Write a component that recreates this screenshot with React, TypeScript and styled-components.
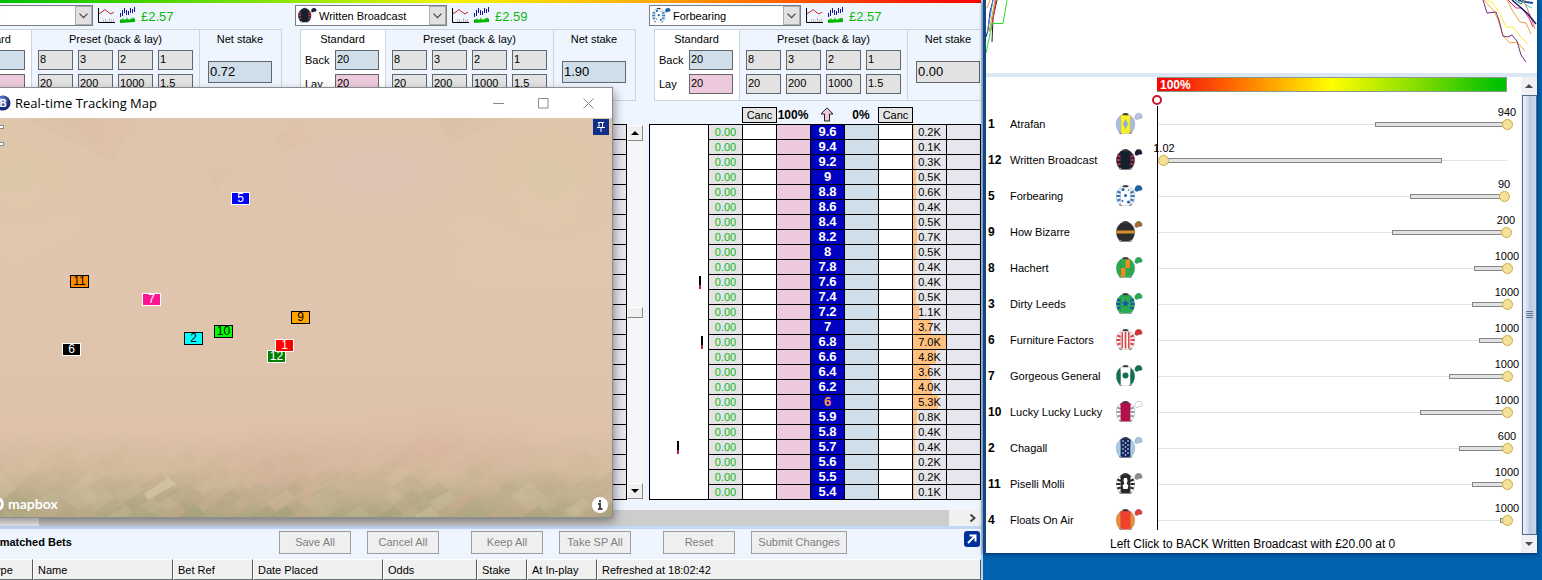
import React from "react";
import styled, { createGlobalStyle } from "styled-components";

const navy = "#00309c";
const pane = "#eef5fe";

const GlobalStyle = createGlobalStyle`
  * { box-sizing: border-box; }
  body { margin: 0; background: #0062b0; color: #000; font: 11px/14px "Liberation Sans", Arial, sans-serif; }
  button, input, select { font: inherit; color: inherit; margin: 0; border-radius: 0; }
  svg { display: block; flex: none; }
`;

const Desktop = styled.div`
  position: relative;
  display: grid;
  grid-template-columns: minmax(0, 983fr) minmax(0, 559fr);
  align-items: start;
  min-height: 100vh;
  overflow: hidden;
`;

/* ---------- ladder window ---------- */

const LadderWindow = styled.main`
  min-width: 0;
  overflow: hidden;
  background: ${pane};
  border-right: 2px solid #b9d3f3;
`;

const HeatStrip = styled.div`
  height: 3px;
  background: linear-gradient(90deg, #00c000 0%, #9bea00 32%, #f4f400 46%, #ffb400 64%, #ff2000 92%, #f00 100%);
`;

const Panels = styled.div`
  display: flex;
  margin-left: -59px;
  padding-top: 2px;
`;

const Panel = styled.section`
  flex: none;
  width: 354px;
`;

const PickerRow = styled.div`
  display: flex;
  align-items: center;
  gap: 5px;
  height: 21px;
`;

const Combo = styled.div`
  display: flex;
  align-items: center;
  width: 152px;
  height: 21px;
  padding-left: 2px;
  background: #fff;
  border: 1px solid #7a7e84;
`;

const ComboSelect = styled.select`
  flex: 1;
  min-width: 0;
  height: 19px;
  padding: 0 0 0 2px;
  border: 0;
  background: transparent;
  appearance: none;
`;

const ComboArrow = styled.span`
  display: grid;
  place-items: center;
  width: 17px;
  height: 19px;
  background: #e1e1e1;
  border: 1px solid #adadad;
`;

const Profit = styled.span`
  font-size: 13px;
  line-height: 16px;
  padding-top: 2px;
  color: #0cb80c;
`;

const StakeGroup = styled.div`
  display: grid;
  grid-template-columns: 85px 168px 81px;
  width: 336px;
  margin: 3px 0 5px 5px;
  border: 1px solid #cdd3dc;
`;

const StakeColumn = styled.div<{ $white?: boolean; $pad: string }>`
  padding: ${(p) => p.$pad};
  background: ${(p) => (p.$white ? "#fff" : "transparent")};
  border-right: 1px solid #cdd3dc;
  &:last-child { border-right: 0; }
`;

const StakeTitle = styled.div`
  display: block;
  height: 19px;
  line-height: 17px;
  text-align: center;
`;

const StandardGrid = styled.div`
  display: grid;
  grid-template-columns: 30px 44px;
  row-gap: 4px;
  align-items: center;
`;

const PresetGrid = styled.div`
  display: grid;
  grid-template-columns: repeat(4, 35px);
  gap: 4px 5px;
`;

const Field = styled.input<{ $tone: "blue" | "pink" | "grey" }>`
  display: block;
  width: 100%;
  height: 20px;
  padding: 0 0 2px 1px;
  border: 1px solid #62666d;
  background: ${(p) => ({ blue: "#d0deea", pink: "#ecc9dc", grey: "#e2e2e2" })[p.$tone]};
`;

const NetField = styled(Field)`
  height: 22px;
  margin-top: 11px;
  font-size: 13px;
`;

const LadderHead = styled.div`
  display: grid;
  grid-template-columns: 93px 34px 34px 34px 34px 34px;
  align-items: center;
  height: 18px;
  padding-bottom: 1px;
  font-size: 12px;
  font-weight: bold;
  text-align: center;
  > :first-child { grid-column: 2; }
`;

const CancelButton = styled.button`
  width: 35px;
  height: 16px;
  padding: 0;
  line-height: 12px;
  font-size: 11px;
  font-weight: normal;
  background: #e4e4e4;
  border: 1px solid #000;
`;

const Centered = styled.span`
  display: grid;
  place-items: center;
`;

const LadderRow = styled.div`
  display: flex;
`;

const HeadSpacer = styled.div`
  height: 18px;
`;

const LadderTable = styled.table`
  flex: none;
  width: 332px;
  table-layout: fixed;
  border-collapse: separate;
  border-spacing: 0;
  border-top: 1px solid #000;
  border-left: 1px solid #000;
`;

const cellColors = {
  white: "#fff",
  profit: "#e4e4e6",
  pink: "#ecc9dc",
  price: "#0000c0",
  blue: "#d0deea",
  amount: "#e6e6ea",
  spare: "#e7e6ee",
};

const Cell = styled.td<{ $kind: keyof typeof cellColors; $last?: boolean }>`
  height: 15px;
  padding: 0;
  line-height: 14px;
  text-align: center;
  background: ${(p) => cellColors[p.$kind]};
  border-right: 1px solid #000;
  border-bottom: 1px solid #000;
  color: ${(p) => (p.$kind === "profit" ? "#10b818" : p.$kind === "price" ? (p.$last ? "#ff9a50" : "#fff") : "#000")};
  ${(p) => p.$kind === "price" && "font-size: 13px; font-weight: bold;"}
`;

const Amount = styled.div`
  height: 14px;
  background-image: linear-gradient(#ffc080, #ffc080);
  background-repeat: no-repeat;
`;

const ClassicScroll = styled.div`
  display: flex;
  flex-direction: column;
  justify-content: space-between;
  width: 17px;
  margin-right: 5px;
  padding: 1px 0;
  background: #f4f6f8;
`;

const ScrollButton = styled.button<{ $thumb?: boolean }>`
  display: grid;
  place-items: center;
  width: 16px;
  height: ${(p) => (p.$thumb ? "11px" : "16px")};
  padding: 0;
  background: #f0f0f0;
  border: 1px solid;
  border-color: #fff #888 #888 #fff;
`;

const HScroll = styled.div`
  display: flex;
  align-items: center;
  height: 16px;
  margin-top: 10px;
  padding: 0 4px 0 39px;
  background: #f0f0f0;
`;

const HThumb = styled.div`
  flex: 1;
  height: 16px;
  margin-right: 20px;
  background: #cdcdcd;
`;

/* ---------- unmatched bets ---------- */

const Bets = styled.section`
  margin-left: -12px;
  border-top: 3px solid #c2d8f6;
`;

const BetsBar = styled.div`
  display: flex;
  align-items: center;
  height: 30px;
  padding: 0 0 4px 0;
`;

const BetsTitle = styled.h2`
  flex: none;
  width: 294px;
  margin: 0 0 0 -3px;
  font-size: 11px;
  line-height: 14px;
`;

const ButtonPair = styled.div`
  display: flex;
  flex: none;
  gap: 16px;
  margin-right: 32px;
`;

const BetButton = styled.button<{ $wide?: boolean }>`
  width: ${(p) => (p.$wide ? "96px" : "72px")};
  height: 23px;
  padding: 0;
  color: #7c7f84;
  background: #efefef;
  border: 1px solid #9a9ea6;
`;

const PopOut = styled.button`
  margin: 0 1px 6px auto;
  padding: 0;
  border: 0;
  background: none;
`;

const BetsTable = styled.table`
  width: 100%;
  table-layout: fixed;
  border-collapse: separate;
  border-spacing: 0;
`;

const BetsHead = styled.th<{ $w?: number }>`
  width: ${(p) => (p.$w ? p.$w + "px" : "auto")};
  height: 21px;
  padding: 0 0 0 4px;
  font-weight: normal;
  text-align: left;
  background: #f0f0f0;
  border: 1px solid;
  border-color: #fff #55585c #6c6f74 #fff;
  &:first-child { padding-left: 0; }
`;

/* ---------- tracking map ---------- */

const MapWindow = styled.section`
  position: absolute;
  left: -12px;
  top: 88px;
  width: 624px;
  background: #fff;
  box-shadow: 0 0 0 1px #8d8d8d, 2px 4px 10px rgba(0, 0, 0, 0.45);
`;

const MapTitleBar = styled.header`
  display: flex;
  align-items: center;
  gap: 4px;
  height: 30px;
  padding: 0 18px 0 7px;
`;

const MapTitle = styled.h1`
  flex: 1;
  margin: 0;
  font: 13px/18px "Open Sans", "Noto Sans", sans-serif;
`;

const WindowButton = styled.button`
  width: 11px;
  height: 11px;
  margin-left: 30px;
  padding: 0;
  border: 0;
  background: none;
`;

const MapCanvas = styled.div`
  position: relative;
  height: 399px;
  overflow: hidden;
  background: #e1c5ae;
`;

const MapTerrain = styled.svg`
  width: 100%;
  height: 100%;
`;

const Marker = styled.span<{ $x: number; $y: number; $bg: string; $fg: string }>`
  position: absolute;
  left: ${(p) => p.$x}px;
  top: ${(p) => p.$y}px;
  width: 19px;
  height: 13px;
  line-height: 11px;
  font-size: 12px;
  text-align: center;
  color: ${(p) => p.$fg};
  background: ${(p) => p.$bg};
  border: 1px solid ${(p) => p.$fg};
`;

const PinButton = styled.button`
  position: absolute;
  top: 1px;
  right: 3px;
  padding: 0;
  border: 0;
  background: none;
`;

const InfoButton = styled(PinButton)`
  top: auto;
  right: 4px;
  bottom: 4px;
`;

const ZoomControls = styled.div`
  position: absolute;
  left: 0;
  top: 7px;
  display: grid;
  gap: 13px;
`;

const ZoomKnob = styled.button`
  width: 16px;
  height: 4px;
  padding: 0;
  background: #fff;
  border: 1px solid #8d8d8d;
`;

const Mapbox = styled.a`
  position: absolute;
  left: 2px;
  bottom: 5px;
  display: flex;
  align-items: center;
  gap: 4px;
  font: bold 14px/16px Lato, sans-serif;
  color: #fff;
  text-decoration: none;
`;

/* ---------- runners window ---------- */

const RunnersWindow = styled.aside`
  margin-right: 5px;
  background: #fff;
  border-left: 3px solid #104a80;
  box-shadow: 0 1px 4px rgba(0, 20, 60, 0.7);
`;

const OddsChart = styled.div`
  display: flex;
  justify-content: space-between;
  height: 77px;
  border-bottom: 4px solid #dce7f5;
`;

const RunnersBody = styled.div`
  display: flex;
`;

const RunnersMain = styled.div`
  flex: 1;
  min-width: 0;
  padding: 0 14px 0 0;
`;

const BookBar = styled.div`
  height: 15px;
  margin-left: 171px;
  padding-left: 3px;
  line-height: 14px;
  font-size: 12px;
  font-weight: bold;
  color: #fff;
  border: 1px solid #8a9a8a;
  border-left: 0;
  background: linear-gradient(90deg, #f00 0%, #f01010 4%, #ff6000 20%, #ff0 50%, #84dc00 75%, #00c000 98%);
`;

const BookKnob = styled.div`
  height: 14px;
  margin-left: 165px;
  padding-top: 2px;
`;

const RunnerRow = styled.div`
  display: grid;
  grid-template-columns: 22px 106px 41px minmax(0, 1fr);
  align-items: center;
  height: 36px;
  padding-left: 2px;
`;

const RunnerNumber = styled.b`
  font-size: 12px;
`;

const Track = styled.div`
  position: relative;
  align-self: start;
  height: 36px;
  border-left: 1px solid #000;
  background: linear-gradient(#e2e2e2, #e2e2e2) 0 18px / 100% 1px no-repeat;
  ${RunnerRow}:last-of-type & { height: 28px; }
`;

const Range = styled.div`
  position: absolute;
  top: 16px;
  height: 5px;
  background: #e2e2e2;
  border: 1px solid #868686;
`;

const Price = styled.div`
  position: absolute;
  top: 0;
  display: flex;
  flex-direction: column;
  align-items: center;
  width: 40px;
  margin-left: -20px;
  line-height: 13px;
`;

const Dot = styled.span`
  width: 11px;
  height: 11px;
  border: 1px solid #cbae3e;
  border-radius: 50%;
  background: #f6e19a;
`;

const Status = styled.p`
  margin: 0 0 2px;
  padding-left: 124px;
  font-size: 12px;
  line-height: 13px;
`;

const RunnerScroll = styled.div`
  display: flex;
  flex-direction: column;
  align-items: center;
  width: 16px;
  background: #f0f0f2;
`;

const RunnerArrow = styled.button`
  display: grid;
  place-items: center;
  width: 16px;
  height: 18px;
  padding: 0;
  border: 0;
  background: none;
`;

const RunnerThumb = styled.div`
  display: grid;
  flex: 1;
  place-items: center;
  width: 15px;
  border: 1px solid #53698f;
  background: linear-gradient(90deg, #eef2fa, #d5deed 35%, #bccbe2 50%, #ccd7e8);
`;

/* ---------- drawings ---------- */

type Pattern = "diamond" | "plain" | "spots" | "hoop" | "quarters" | "star" | "stripes" | "disc" | "dots" | "jigsaw";

interface SilkSpec {
  body: string;
  sleeve: string;
  cap: string;
  accent: string;
  pattern: Pattern;
  trim?: string;
}

const star = (cx: number, cy: number, r: number) =>
  Array.from({ length: 10 }, (_, i) => {
    const a = (Math.PI * i) / 5 - Math.PI / 2;
    const d = i % 2 ? r * 0.42 : r;
    return `${(cx + d * Math.cos(a)).toFixed(1)},${(cy + d * Math.sin(a)).toFixed(1)}`;
  }).join(" ");

function SilkPattern({ pattern, accent }: { pattern: Pattern; accent: string }) {
  switch (pattern) {
    case "diamond": return <path d="M9.500 7l2.500 5-2.500 5-2.500-5z" fill={accent} />;
    case "spots":
      return <g fill={accent}><circle cx="9.500" cy="11.500" r="1.500" /><circle cx="7" cy="5.500" r="1.500" /><circle cx="12.500" cy="18" r="1.500" /><circle cx="12.500" cy="6" r=".8" /><circle cx="6.500" cy="17" r=".9" /></g>;
    case "hoop": return <path d="M.5 10.500h18v3H.5z" fill={accent} />;
    case "quarters": return <path d="M9.500 3.500h4.500V12H9.500zM5 12h4.500v8.500H5z" fill={accent} />;
    case "star": return <polygon points={star(9.5, 11.5, 4)} fill={accent} />;
    case "stripes": return <path d="M5.500 4H7v16.500H5.500zM8.700 4h1.600v16.500H8.700zM12 4h1.500v16.500H12z" fill={accent} />;
    case "disc": return <circle cx="9.500" cy="11.500" r="3" fill={accent} />;
    case "dots":
      return <g fill={accent}>{[5, 9, 13, 17].map((y) => <g key={y}><circle cx="7" cy={y} r=".8" /><circle cx="12" cy={y} r=".8" /><circle cx="9.500" cy={y + 2} r=".8" /></g>)}</g>;
    case "jigsaw": return <path d="M8 6h3l.6 3-1 2.500 1.800 2-.8 3.500H7.400l-.8-3.500 1.800-2-1-2.500z" fill={accent} />;
    default: return null;
  }
}

function Silk({ spec, size = 27 }: { spec: SilkSpec; size?: number }) {
  const { body, sleeve, cap, accent, pattern, trim } = spec;
  return (
    <svg width={size} height={Math.round((size * 24) / 27)} viewBox="0 0 27 24">
      <path d="M5.500 3C2 5 .3 8 .3 12c0 3.500 1.200 6.300 3.200 8.300L6 19.500zM13.500 3c3.500 2 5.200 5 5.200 9 0 3.500-1.200 6.300-3.200 8.300L13 19.500z" fill={sleeve} stroke="#56607a" strokeOpacity=".5" strokeWidth=".6" />
      {trim && <path d="M1.300 7.500l3.700 1.500M.4 12h4.200M1.300 16.500l3.500-1M17.700 7.500L14 9M18.600 12h-4.200M17.700 16.500l-3.500-1" stroke={trim} strokeWidth="2" />}
      <path d="M6.500 2.300L4.300 3.800c.6 5 .5 11 .3 15.700l1.200 2h7.400l1.200-2c-.2-4.700-.3-10.700.3-15.700l-2.200-1.500z" fill={body} stroke="#444c5c" strokeOpacity=".3" strokeWidth=".5" />
      <SilkPattern pattern={pattern} accent={accent} />
      <path d="M6.700 1.800c1.700-1 4-1 5.600 0v1.400H6.700z" fill="#3c3c40" />
      <path d="M3.200 20.700l2.300.8M15.800 20.700l-2.300.8" stroke="#444" strokeWidth="1" />
      <path d="M18.800 6.300c-.2-3 1.400-5 3.900-5 2.300 0 3.500 1.800 3.500 4.200-.8 1.200-1.700 1-3.200.9-1.400 1.600-3.300 1.400-4.200-.1z" fill={cap} stroke="#56607a" strokeOpacity=".5" strokeWidth=".6" />
    </svg>
  );
}

const Chevron = () => (
  <svg width="9" height="6" viewBox="0 0 9 6"><path d="M.5.7l4 4 4-4" fill="none" stroke="#444" strokeWidth="1.200" /></svg>
);

const Triangle = ({ down, color = "#000" }: { down?: boolean; color?: string }) => (
  <svg width="8" height="4" viewBox="0 0 8 4"><path d={down ? "M0 0h8L4 4z" : "M0 4h8L4 0z"} fill={color} /></svg>
);

const PriceGraphIcon = () => (
  <svg width="17" height="17" viewBox="0 0 17 17" fill="none">
    <path d="M5.500 15.500v-3M7.500 15.500V12M9.500 15.500v-2M11.500 15.500V11M13.500 15.500v-3M15.500 15.500V12" stroke="#b9b9b9" />
    <path d="M1 6.500l3-1.500 3-2.500 3 2.500 3 2 3-2" stroke="#c8222e" />
    <path d="M.5 1v14.500H17" stroke="#000" />
  </svg>
);

const VolumeGraphIcon = () => (
  <svg width="16" height="17" viewBox="0 0 16 17">
    <path d="M.5 6v4M2.500 3v6M4.500 1v5M6.500 3v5M8.500 4v4M10.500 1v5M12.500 2v4M14.500 0v5" stroke="#15159c" />
    <path d="M0 16v-3l1-1 1 1 1-2 1 2 1-1 1 1 1-3 1 3 1-1 1 1 1-2 1 1 1-2 1 2 1-1v4z" fill="#00b400" />
  </svg>
);

const UpArrow = () => (
  <svg width="14" height="15" viewBox="0 0 14 15"><path d="M7 .8l6 6.200H9.500v7h-5V7H1z" fill="#f0c8dc" stroke="#222" /></svg>
);

/* ---------- data ---------- */

interface Runner {
  no: number;
  name: string;
  price: string;
  from: number;
  to: number;
  at: number;
  silk: SilkSpec;
}

const runners: Runner[] = [
  { no: 1, name: "Atrafan", price: "940", from: 218, to: 351, at: 350, silk: { body: "#f7ee2c", sleeve: "#a9bfe2", cap: "#b4c4e2", accent: "#8fa9d6", pattern: "diamond" } },
  { no: 12, name: "Written Broadcast", price: "1.02", from: 6, to: 285, at: 6, silk: { body: "#14202c", sleeve: "#1a2430", cap: "#14202c", accent: "#14202c", pattern: "plain", trim: "#b83048" } },
  { no: 5, name: "Forbearing", price: "90", from: 253, to: 347, at: 347, silk: { body: "#fbfdff", sleeve: "#e8f0fa", cap: "#1a62a8", accent: "#1a62a8", pattern: "spots", trim: "#3a78b8" } },
  { no: 9, name: "How Bizarre", price: "200", from: 235, to: 349, at: 349, silk: { body: "#2c2c2c", sleeve: "#2c2c2c", cap: "#9a6c30", accent: "#d8902c", pattern: "hoop" } },
  { no: 8, name: "Hachert", price: "1000", from: 317, to: 351, at: 350, silk: { body: "#27ac50", sleeve: "#27ac50", cap: "#27ac50", accent: "#f58a20", pattern: "quarters" } },
  { no: 3, name: "Dirty Leeds", price: "1000", from: 315, to: 351, at: 350, silk: { body: "#27ac50", sleeve: "#27ac50", cap: "#27ac50", accent: "#1c50b0", pattern: "star", trim: "#1c50b0" } },
  { no: 6, name: "Furniture Factors", price: "1000", from: 322, to: 351, at: 350, silk: { body: "#fff6f2", sleeve: "#fff6f2", cap: "#d83030", accent: "#d84848", pattern: "stripes", trim: "#d84848" } },
  { no: 7, name: "Gorgeous General", price: "1000", from: 292, to: 351, at: 350, silk: { body: "#ffffff", sleeve: "#107050", cap: "#107050", accent: "#107050", pattern: "disc" } },
  { no: 10, name: "Lucky Lucky Lucky", price: "1000", from: 263, to: 351, at: 350, silk: { body: "#b4104a", sleeve: "#ffffff", cap: "#ffffff", accent: "#b4104a", pattern: "plain", trim: "#9c9ca8" } },
  { no: 2, name: "Chagall", price: "600", from: 302, to: 351, at: 350, silk: { body: "#142860", sleeve: "#a8cce8", cap: "#a8c4e4", accent: "#ffffff", pattern: "dots" } },
  { no: 11, name: "Piselli Molli", price: "1000", from: 315, to: 351, at: 350, silk: { body: "#282828", sleeve: "#ffffff", cap: "#8c8c8c", accent: "#ffffff", pattern: "jigsaw", trim: "#282828" } },
  { no: 4, name: "Floats On Air", price: "1000", from: 343, to: 351, at: 350, silk: { body: "#f04030", sleeve: "#f08c30", cap: "#e04040", accent: "#f04030", pattern: "plain" } },
];

/* price, available amount, bar length in pixels */
const ladder: [string, string, number][] = [
  ["9.6", "0.2K", 1], ["9.4", "0.1K", 1], ["9.2", "0.3K", 2], ["9", "0.5K", 3], ["8.8", "0.6K", 3],
  ["8.6", "0.4K", 2], ["8.4", "0.5K", 3], ["8.2", "0.7K", 4], ["8", "0.5K", 3], ["7.8", "0.4K", 2],
  ["7.6", "0.4K", 2], ["7.4", "0.5K", 3], ["7.2", "1.1K", 6], ["7", "3.7K", 18], ["6.8", "7.0K", 33],
  ["6.6", "4.8K", 23], ["6.4", "3.6K", 17], ["6.2", "4.0K", 19], ["6", "5.3K", 25], ["5.9", "0.8K", 4],
  ["5.8", "0.4K", 2], ["5.7", "0.4K", 2], ["5.6", "0.2K", 1], ["5.5", "0.2K", 1], ["5.4", "0.1K", 1],
];

const markers: [number, number, number, string, string][] = [
  [5, 243, 74, "#0000ff", "#fff"],
  [11, 82, 157, "#ff8c00", "#000"],
  [7, 154, 175, "#ff1493", "#fff"],
  [9, 303, 193, "#ffa500", "#000"],
  [10, 226, 207, "#00ff00", "#000"],
  [2, 196, 214, "#00ffff", "#000"],
  [12, 279, 232, "#008000", "#fff"],
  [1, 287, 221, "#ff0000", "#fff"],
  [6, 74, 225, "#000", "#fff"],
];

/* ---------- composed parts ---------- */

function Stakes({ name, net, netTone }: { name: string; net: string; netTone: "blue" | "grey" }) {
  const id = name.replace(/\s/g, "");
  return (
    <StakeGroup>
      <StakeColumn $white $pad="1px 5px 6px 4px">
        <StakeTitle>Standard</StakeTitle>
        <StandardGrid>
          <label htmlFor={id + "-back"}>Back</label>
          <Field id={id + "-back"} $tone="blue" defaultValue="20" />
          <label htmlFor={id + "-lay"}>Lay</label>
          <Field id={id + "-lay"} $tone="pink" defaultValue="20" />
        </StandardGrid>
      </StakeColumn>
      <StakeColumn $pad="1px 6px 6px 6px">
        <StakeTitle>Preset (back &amp; lay)</StakeTitle>
        <PresetGrid>
          {["8", "3", "2", "1", "20", "200", "1000", "1.5"].map((v, i) => (
            <Field key={v} $tone="grey" defaultValue={v} aria-label={`Preset ${i + 1}`} />
          ))}
        </PresetGrid>
      </StakeColumn>
      <StakeColumn $pad="1px 9px 6px 8px">
        <StakeTitle as="label" htmlFor={id + "-net"}>Net stake</StakeTitle>
        <NetField id={id + "-net"} $tone={netTone} defaultValue={net} />
      </StakeColumn>
    </StakeGroup>
  );
}

function Ladder({ rows }: { rows: [string, string, number][] }) {
  return (
    <LadderTable>
      <colgroup>
        <col width={59} />
        {Array.from({ length: 8 }, (_, i) => <col key={i} width={34} />)}
      </colgroup>
      <tbody>
        {rows.map(([price, amount, bar], i) => (
          <tr key={i}>
            {i === 0 && (
              <Cell $kind="white" rowSpan={rows.length}>
                {price && (
                  <svg width="58" height="374" viewBox="0 0 58 374">
                    <path d="M50 151v9M52 211v9M28 316v9" stroke="#000" strokeWidth="2" />
                    <path d="M50 160v4M52 220v4M28 325v4" stroke="#b82038" strokeWidth="2" />
                  </svg>
                )}
              </Cell>
            )}
            <Cell $kind="profit">{price && "0.00"}</Cell>
            <Cell $kind="white" />
            <Cell $kind="pink" />
            <Cell $kind="price" $last={price === "6"}>{price}</Cell>
            <Cell $kind="blue" />
            <Cell $kind="white" />
            <Cell $kind="amount"><Amount style={{ backgroundSize: `${bar}px 100%` }}>{amount}</Amount></Cell>
            <Cell $kind="spare" />
          </tr>
        ))}
      </tbody>
    </LadderTable>
  );
}

function LadderPanel({ runner, profit, net, netTone, active }: { runner: Runner; profit: string; net: string; netTone: "blue" | "grey"; active?: boolean }) {
  return (
    <Panel>
      <PickerRow>
        <Combo>
          <Silk spec={runner.silk} size={19} />
          <ComboSelect aria-label="Runner" defaultValue={runner.name}>
            <option>{runner.name}</option>
          </ComboSelect>
          <ComboArrow><Chevron /></ComboArrow>
        </Combo>
        <PriceGraphIcon />
        <VolumeGraphIcon />
        <Profit>{profit}</Profit>
      </PickerRow>
      <Stakes name={runner.name} net={net} netTone={netTone} />
      {active ? (
        <LadderHead>
          <CancelButton>Canc</CancelButton>
          <span>100%</span>
          <Centered><UpArrow /></Centered>
          <span>0%</span>
          <CancelButton>Canc</CancelButton>
        </LadderHead>
      ) : (
        <HeadSpacer />
      )}
      <LadderRow>
        <Ladder rows={active ? ladder : ladder.map(() => ["", "", 0])} />
        <ClassicScroll>
          <ScrollButton aria-label="Scroll up"><Triangle /></ScrollButton>
          <ScrollButton $thumb aria-label="Scroll position" />
          <ScrollButton aria-label="Scroll down"><Triangle down /></ScrollButton>
        </ClassicScroll>
      </LadderRow>
    </Panel>
  );
}

/* Coarse satellite pixels: slanted quads that get greener towards the lower edge. */
function Terrain() {
  let seed = 11;
  const rand = () => (seed = (seed * 16807) % 2147483647) / 2147483647;
  const tiles: React.ReactNode[] = [];
  for (let row = 0; row < 12; row++) {
    for (let col = -4; col < 40; col++) {
      const x = col * 18 + (row % 2) * 9;
      const y = 312 + row * 8;
      const strength = Math.pow(row / 11, 2) * 0.34 * rand();
      const tone = ["#8f9870", "#d8cfae", "#a09a72", "#d0a894"][Math.floor(rand() * 4)];
      tiles.push(<path key={`${row}.${col}`} d={`M${x} ${y}l20 -12l9 9l-20 12z`} fill={tone} opacity={strength.toFixed(2)} />);
    }
  }
  return (
    <MapTerrain viewBox="0 0 624 399" preserveAspectRatio="none" aria-hidden="true">
      <defs>
        <linearGradient id="ground" x1="0" y1="0" x2="0" y2="1">
          <stop offset="0" stopColor="#dfc4ac" />
          <stop offset=".4" stopColor="#e1c6af" />
          <stop offset=".78" stopColor="#dec2aa" />
          <stop offset=".88" stopColor="#d5bc9f" />
          <stop offset="1" stopColor="#b4a985" />
        </linearGradient>
        <radialGradient id="rose"><stop offset="0" stopColor="#dcb4a0" stopOpacity=".55" /><stop offset="1" stopColor="#dcb4a0" stopOpacity="0" /></radialGradient>
        <radialGradient id="sand"><stop offset="0" stopColor="#dccaa6" stopOpacity=".55" /><stop offset="1" stopColor="#dccaa6" stopOpacity="0" /></radialGradient>
        <radialGradient id="lilac"><stop offset="0" stopColor="#dec3bb" stopOpacity=".6" /><stop offset="1" stopColor="#dec3bb" stopOpacity="0" /></radialGradient>
      </defs>
      <rect width="624" height="399" fill="url(#ground)" />
      <ellipse cx="30" cy="60" rx="110" ry="90" fill="url(#sand)" />
      <ellipse cx="560" cy="60" rx="140" ry="130" fill="url(#sand)" />
      <ellipse cx="390" cy="55" rx="110" ry="50" fill="url(#lilac)" />
      <ellipse cx="300" cy="350" rx="110" ry="50" fill="url(#rose)" />
      <ellipse cx="450" cy="330" rx="130" ry="45" fill="url(#rose)" />
      <path d="M40 0h110l-26 44zM222 52l26-4-20 26zM285 20l26-14 10 16-24 12zM450 0h70l-58 28z" fill="#cfb292" opacity=".13" />
      {tiles}
      <path d="M156 376l24-16 8 6-28 16z" fill="#d8c8a8" opacity=".7" />
    </MapTerrain>
  );
}

function TrackingMap() {
  return (
    <MapWindow>
      <MapTitleBar>
        <svg width="16" height="16" viewBox="0 0 16 16">
          <defs><radialGradient id="ball" cx=".4" cy=".3"><stop offset="0" stopColor="#7fa0e8" /><stop offset="1" stopColor="#182c7c" /></radialGradient></defs>
          <circle cx="8" cy="8" r="7.500" fill="url(#ball)" />
          <text x="8" y="11.500" textAnchor="middle" fontSize="10" fontWeight="bold" fill="#fff">B</text>
        </svg>
        <MapTitle>Real-time Tracking Map</MapTitle>
        <WindowButton aria-label="Minimise"><svg width="11" height="11"><path d="M0 5.500h11" stroke="#8a8a8a" /></svg></WindowButton>
        <WindowButton aria-label="Maximise"><svg width="11" height="11"><path d="M.5.5h9.500V10H.5z" fill="none" stroke="#8a8a8a" /></svg></WindowButton>
        <WindowButton aria-label="Close"><svg width="11" height="11"><path d="M.5.5l10 10M10.500.5l-10 10" stroke="#8a8a8a" /></svg></WindowButton>
      </MapTitleBar>
      <MapCanvas>
        <Terrain />
        <ZoomControls>
          <ZoomKnob aria-label="Zoom in" />
          <ZoomKnob aria-label="Zoom out" />
        </ZoomControls>
        {markers.map(([no, x, y, bg, fg]) => (
          <Marker key={no} $x={x} $y={y} $bg={bg} $fg={fg}>{no}</Marker>
        ))}
        <PinButton aria-label="Pin window">
          <svg width="16" height="16" viewBox="0 0 16 16"><rect width="16" height="16" fill="#10308c" /><path d="M6 3v5.500M9.500 3v5.500M5 3.500h6M4 8.500h8M8 9v4" stroke="#fff" /></svg>
        </PinButton>
        <InfoButton aria-label="Map information">
          <svg width="16" height="16" viewBox="0 0 16 16"><circle cx="8" cy="8" r="8" fill="#fff" /><path d="M8 3v2.500M6 7h2v5.500M6 12h4.500" fill="none" stroke="#4c4c44" strokeWidth="2" /></svg>
        </InfoButton>
        <Mapbox href="#mapbox">
          <svg width="14" height="14" viewBox="0 0 14 14"><circle cx="7" cy="7" r="5.500" fill="none" stroke="#fff" strokeWidth="3" /></svg>
          mapbox
        </Mapbox>
      </MapCanvas>
    </MapWindow>
  );
}

function UnmatchedBets() {
  return (
    <Bets>
      <BetsBar>
        <BetsTitle>Unmatched Bets</BetsTitle>
        <ButtonPair><BetButton>Save All</BetButton><BetButton>Cancel All</BetButton></ButtonPair>
        <ButtonPair><BetButton>Keep All</BetButton><BetButton>Take SP All</BetButton></ButtonPair>
        <ButtonPair><BetButton>Reset</BetButton><BetButton $wide>Submit Changes</BetButton></ButtonPair>
        <PopOut aria-label="Open in new window">
          <svg width="16" height="16" viewBox="0 0 16 16"><rect width="16" height="16" rx="3" fill={navy} /><path d="M4 12l7-7M5.500 4.500h6v6" fill="none" stroke="#fff" strokeWidth="2" /></svg>
        </PopOut>
      </BetsBar>
      <BetsTable>
        <thead>
          <tr>
            <BetsHead $w={45}>Type</BetsHead>
            <BetsHead $w={140}>Name</BetsHead>
            <BetsHead $w={80}>Bet Ref</BetsHead>
            <BetsHead $w={130}>Date Placed</BetsHead>
            <BetsHead $w={94}>Odds</BetsHead>
            <BetsHead $w={50}>Stake</BetsHead>
            <BetsHead $w={70}>At In-play</BetsHead>
            <BetsHead>Refreshed at 18:02:42</BetsHead>
          </tr>
        </thead>
      </BetsTable>
    </Bets>
  );
}

const pct = (px: number) => `${(px / 350) * 100}%`;

function Runners() {
  return (
    <RunnersWindow>
      <OddsChart>
        <svg width="24" height="73" viewBox="0 0 24 73" fill="none">
          <path d="M1 8l3-8" stroke="#ff9c20" />
          <path d="M0 37l2-7 2-18 3-12" stroke="#101080" />
          <path d="M1 34L7 0" stroke="#4a90d8" />
          <path d="M3 32L9 0" stroke="#d0a030" />
          <path d="M6 42l1-24 4-18" stroke="#301818" />
          <path d="M5 30L10 0" stroke="#d04040" />
          <path d="M0 53l3-14 3-15.500h11L21 0" stroke="#30d830" />
        </svg>
        <svg width="56" height="73" viewBox="0 0 56 73" fill="none">
          <path d="M37 0l8 2 7 1" stroke="#1c50a8" strokeWidth="2" />
          <path d="M40 0l5 5 6 3" stroke="#20d8e8" />
          <path d="M34 0l6 4 3-4" stroke="#188840" />
          <path d="M26 0l5 10 8 12 6 1 5 11" stroke="#f0a040" />
          <path d="M27 0l8 8h6l7 10 4 9" stroke="#e82068" />
          <path d="M42 0l4 8 4 10 4 11" stroke="#f08040" />
          <path d="M31 0l7 6 9 8 8 10" stroke="#181870" strokeWidth="1.500" />
          <path d="M3 0l10 11 4 9 5 16 7 7 7-1 8 9" stroke="#f4a830" />
          <path d="M6 0l6 3 7 11 6 13h7l6 8 9 9" stroke="#f4f030" />
          <path d="M2 0l4 13 9-1 3 8 4 16 5 1 4-2 5 6 4 14 5 7" stroke="#703080" />
        </svg>
      </OddsChart>
      <RunnersBody>
        <RunnersMain>
          <BookBar>100%</BookBar>
          <BookKnob>
            <svg width="12" height="12" viewBox="0 0 12 12"><circle cx="6" cy="6" r="4" fill="#fff" stroke="#c8142c" strokeWidth="2" /></svg>
          </BookKnob>
          {runners.map((r) => (
            <RunnerRow key={r.no}>
              <RunnerNumber>{r.no}</RunnerNumber>
              <span>{r.name}</span>
              <Silk spec={r.silk} />
              <Track>
                <Range style={{ left: pct(r.from), width: pct(r.to - r.from) }} />
                <Price style={{ left: pct(r.at) }}>{r.price}<Dot /></Price>
              </Track>
            </RunnerRow>
          ))}
          <Status>Left Click to BACK Written Broadcast with £20.00 at 0</Status>
        </RunnersMain>
        <RunnerScroll>
          <RunnerArrow aria-label="Scroll up"><Triangle color="#444c58" /></RunnerArrow>
          <RunnerThumb>
            <svg width="7" height="8"><path d="M0 .5h7M0 2.500h7M0 4.500h7M0 6.500h7" stroke="#66789a" /></svg>
          </RunnerThumb>
          <RunnerArrow aria-label="Scroll down"><Triangle down color="#444c58" /></RunnerArrow>
        </RunnerScroll>
      </RunnersBody>
    </RunnersWindow>
  );
}

export default function App() {
  return (
    <>
      <GlobalStyle />
      <Desktop>
        <LadderWindow>
          <HeatStrip />
          <Panels>
            <LadderPanel runner={runners[0]} profit="£2.57" net="0.72" netTone="blue" />
            <LadderPanel runner={runners[1]} profit="£2.59" net="1.90" netTone="blue" />
            <LadderPanel runner={runners[2]} profit="£2.57" net="0.00" netTone="grey" active />
          </Panels>
          <HScroll>
            <HThumb />
            <svg width="8" height="10" viewBox="0 0 8 10"><path d="M1.500 1.500L5.500 5l-4 3.500" fill="none" stroke="#444" strokeWidth="2" /></svg>
          </HScroll>
          <UnmatchedBets />
        </LadderWindow>
        <Runners />
        <TrackingMap />
      </Desktop>
    </>
  );
}
